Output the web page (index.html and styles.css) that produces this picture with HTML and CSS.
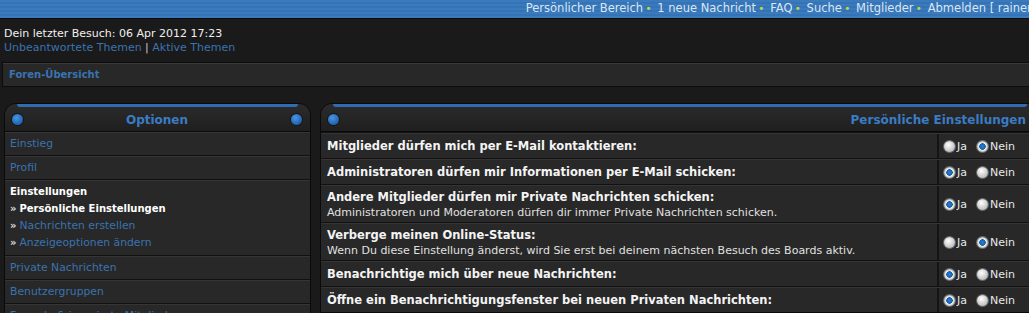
FILE: index.html
```html
<!DOCTYPE html>
<html>
<head>
    <meta charset="utf-8">
    <title>Persönliche Einstellungen</title>
    <link rel="stylesheet" href="styles.css">
</head>
<body>
    <div class="page">
        <div class="topbar">
            <a href="#">Persönlicher Bereich</a><span class="dot">•</span>
            <a href="#">1 neue Nachricht</a><span class="dot">•</span>
            <a href="#">FAQ</a><span class="dot">•</span>
            <a href="#">Suche</a><span class="dot">•</span>
            <a href="#">Mitglieder</a><span class="dot">•</span>
            <a href="#">Abmelden [ rainer ]</a>
        </div>

        <div class="info">
            <p class="lastvisit">Dein letzter Besuch: 06 Apr 2012 17:23</p>
            <p class="quicklinks"><a href="#">Unbeantwortete Themen</a> | <a href="#">Aktive Themen</a></p>
        </div>

        <div class="breadcrumb"><a href="#">Foren-Übersicht</a></div>

        <div class="main">
            <div class="panel side">
                <div class="panel-head">
                    <span class="knob"></span>
                    <h2>Optionen</h2>
                    <span class="knob"></span>
                </div>
                <ul class="menu">
                    <li><a href="#">Einstieg</a></li>
                    <li><a href="#">Profil</a></li>
                    <li class="open">
                        <strong>Einstellungen</strong>
                        <ul class="sub">
                            <li class="current"><span class="arrow">»</span>Persönliche Einstellungen</li>
                            <li><span class="arrow">»</span><a href="#">Nachrichten erstellen</a></li>
                            <li><span class="arrow">»</span><a href="#">Anzeigeoptionen ändern</a></li>
                        </ul>
                    </li>
                    <li><a href="#">Private Nachrichten</a></li>
                    <li><a href="#">Benutzergruppen</a></li>
                    <li><a href="#">Freunde &amp; ignorierte Mitglieder</a></li>
                </ul>
            </div>

            <div class="panel content">
                <div class="panel-head">
                    <span class="knob"></span>
                    <h2>Persönliche Einstellungen</h2>
                </div>
                <div class="settings">
                    <div class="row">
                        <div class="label"><b>Mitglieder dürfen mich per E-Mail kontaktieren:</b></div>
                        <div class="choice"><span class="radio"></span>Ja<span class="radio on"></span>Nein</div>
                    </div>
                    <div class="row">
                        <div class="label"><b>Administratoren dürfen mir Informationen per E-Mail schicken:</b></div>
                        <div class="choice"><span class="radio on"></span>Ja<span class="radio"></span>Nein</div>
                    </div>
                    <div class="row tall">
                        <div class="label"><b>Andere Mitglieder dürfen mir Private Nachrichten schicken:</b>
                            <span class="hint">Administratoren und Moderatoren dürfen dir immer Private Nachrichten schicken.</span></div>
                        <div class="choice"><span class="radio on"></span>Ja<span class="radio"></span>Nein</div>
                    </div>
                    <div class="row tall">
                        <div class="label"><b>Verberge meinen Online-Status:</b>
                            <span class="hint">Wenn Du diese Einstellung änderst, wird Sie erst bei deinem nächsten Besuch des Boards aktiv.</span></div>
                        <div class="choice"><span class="radio"></span>Ja<span class="radio on"></span>Nein</div>
                    </div>
                    <div class="row">
                        <div class="label"><b>Benachrichtige mich über neue Nachrichten:</b></div>
                        <div class="choice"><span class="radio on"></span>Ja<span class="radio"></span>Nein</div>
                    </div>
                    <div class="row">
                        <div class="label"><b>Öffne ein Benachrichtigungsfenster bei neuen Privaten Nachrichten:</b></div>
                        <div class="choice"><span class="radio on"></span>Ja<span class="radio"></span>Nein</div>
                    </div>
                </div>
            </div>
        </div>
    </div>
</body>
</html>
```

FILE: styles.css
```css
body {
    margin: 0;
    background: #1a1a1a;
    color: #e8e8e8;
    font-family: "DejaVu Sans", Verdana, sans-serif;
    font-size: 11px;
    overflow: hidden;
}
a {
    color: #3a73b0;
    text-decoration: none;
}
p {
    margin: 0;
}
.page {
    width: 1040px;
}

/* top navigation */
.topbar {
    height: 18px;
    line-height: 17px;
    text-align: right;
    white-space: nowrap;
    font-size: 11.5px;
    background: repeating-linear-gradient(180deg, #3a7abd 0, #3a7abd 2px, #3373b6 2px, #3373b6 4px);
    border-bottom: 1px solid #0b0b0b;
}
.topbar a {
    color: #dce6f2;
}
.topbar .dot {
    color: #b8d84a;
    margin: 0 2px;
    font-size: 11px;
}

.info {
    padding: 8px 4px 7px;
    font-size: 11px;
    line-height: 14px;
}
.lastvisit {
    color: #f0f0f0;
}
.quicklinks {
    color: #c8c8c8;
}

.breadcrumb {
    margin: 0 2px;
    height: 23px;
    line-height: 23px;
    padding-left: 6px;
    background: #282828;
    border: 1px solid #0c0c0c;
    box-shadow: inset 0 1px 0 #3a3a3a;
    font-size: 10px;
    font-weight: bold;
}

/* panels */
.main {
    display: flex;
    gap: 9px;
    padding: 16px 0 0 4px;
    align-items: flex-start;
}
.panel {
    background: #111;
    border: 1px solid #0a0a0a;
    border-radius: 12px 12px 0 0;
}
.side {
    width: 305px;
}
.content {
    flex: 1;
}
.panel-head {
    position: relative;
    height: 27px;
    display: flex;
    align-items: center;
    padding: 0 8px 0 7px;
    background: linear-gradient(#2b2b2b, #1f1f1f);
    border-radius: 11px 11px 0 0;
    border-bottom: 1px solid #0a0a0a;
}
.content .panel-head {
    padding-right: 13px;
}
.panel-head::before {
    content: '';
    position: absolute;
    top: 0;
    left: 12px;
    right: 12px;
    height: 3px;
    background: #2f6db3;
    border-radius: 0 0 3px 3px;
}
.panel-head h2 {
    flex: 1;
    margin: 0;
    padding-top: 4px;
    font-size: 12px;
    color: #3a7cc4;
    text-align: center;
}
.content .panel-head h2 {
    text-align: right;
}
.knob {
    width: 11px;
    height: 11px;
    margin-top: 3px;
    border-radius: 50%;
    background: radial-gradient(circle at 40% 35%, #4a95e4, #1f62ad 70%);
    box-shadow: 0 0 0 1px #151515;
}

/* side menu */
.menu {
    list-style: none;
    margin: 0;
    padding: 0;
}
.menu > li {
    background: #282828;
    border-top: 1px solid #353535;
    margin-top: 1px;
    padding: 0 5px;
    line-height: 22px;
    font-size: 10.8px;
}
.menu > li:first-child {
    margin-top: 0;
}
.menu > li.open {
    padding: 2px 5px 4px;
    line-height: 17px;
}
.menu strong {
    color: #fff;
    font-size: 10px;
}
.sub {
    list-style: none;
    margin: 0;
    padding: 0;
}
.sub li.current {
    color: #fff;
    font-weight: bold;
    font-size: 10px;
}
.arrow {
    color: #ddd;
    margin-right: 3px;
    font-weight: bold;
    font-size: 10px;
}

/* settings table */
.row {
    display: flex;
    background: #282828;
    border-top: 1px solid #353535;
    margin-top: 1px;
    min-height: 24px;
}
.row.tall {
    min-height: 36px;
}
.label {
    width: 604px;
    padding: 0 6px;
    display: flex;
    flex-direction: column;
    justify-content: center;
    font-size: 11.5px;
    line-height: 16px;
    color: #f4f4f4;
    border-right: 2px solid #141414;
}
.hint {
    font-size: 11px;
    line-height: 15px;
    color: #e0e0e0;
}
.choice {
    flex: 1;
    display: flex;
    align-items: center;
    padding-left: 5px;
    font-size: 11px;
    color: #e8e8e8;
}
.radio {
    width: 11px;
    height: 11px;
    margin-right: 2px;
    border-radius: 50%;
    background: radial-gradient(circle at 40% 35%, #ffffff, #c0c0c0 70%, #9a9a9a);
    box-shadow: 0 0 0 1px #6c6c6c;
}
.choice .radio:nth-of-type(2) {
    margin-left: 10px;
}
.radio.on {
    background: radial-gradient(circle, #2a83d8 0, #155ea8 3px, #f4f4f4 3.5px, #c8c8c8 5px);
}
```
